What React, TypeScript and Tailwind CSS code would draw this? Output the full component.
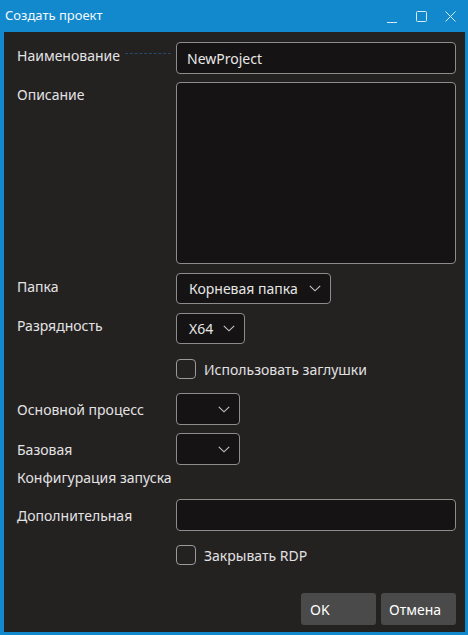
import React from "react";

const font = { fontFamily: '"Noto Sans", "Open Sans", sans-serif' };

function Chevron({ className = "" }: { className?: string }) {
  return (
    <svg width="12" height="7" viewBox="0 0 12 7" className={className} fill="none">
      <path d="M0.8 0.8 L6 5.8 L11.2 0.8" stroke="#c8c8c8" strokeWidth="1.1" />
    </svg>
  );
}

function Select({ width, value }: { width: string; value?: string }) {
  return (
    <div
      className={`${width} h-full flex items-center justify-between rounded-[4px] border border-[#8c8c8c] bg-[#151313] pl-[12px] pr-[9px] text-[14px] text-[#e6e6e6]`}
    >
      <span>{value ?? ""}</span>
      <Chevron />
    </div>
  );
}

function Checkbox({ label }: { label: string }) {
  return (
    <div className="flex items-center h-[20px]">
      <div className="w-[20px] h-[20px] rounded-[4px] border border-[#9a9a9a]" />
      <span className="ml-[8px] text-[14px] text-[#e2e2e2]">{label}</span>
    </div>
  );
}

function Label({ children, pt = 0 }: { children: React.ReactNode; pt?: number }) {
  return (
    <div className="w-[159px] shrink-0 text-[14px] leading-[19px] text-[#e3e3e3]" style={{ paddingTop: pt }}>
      {children}
    </div>
  );
}

export default function App() {
  return (
    <div className="w-[468px] h-[635px] bg-[#1289cc] flex flex-col" style={font}>
      {/* title bar */}
      <div className="h-[32px] flex items-center shrink-0 text-white">
        <span className="ml-[5px] text-[13px] text-[#f2f8fc]">Создать проект</span>
        <div className="ml-auto flex items-center h-full">
          <svg width="10" height="10" viewBox="0 0 10 10" className="mr-[19px] mt-[4px]">
            <path d="M0 9.5 H10" stroke="#d6ebf7" strokeWidth="1" />
          </svg>
          <svg width="11" height="11" viewBox="0 0 11 11" className="mr-[18px]">
            <rect x="0.5" y="0.5" width="10" height="10" fill="none" stroke="#d6ebf7" strokeWidth="1" rx="1" />
          </svg>
          <svg width="11" height="11" viewBox="0 0 11 11" className="mr-[12px]">
            <path d="M0.5 0.5 L10.5 10.5 M10.5 0.5 L0.5 10.5" stroke="#d6ebf7" strokeWidth="1" />
          </svg>
        </div>
      </div>

      {/* dialog body */}
      <div className="flex-1 ml-[4px] mr-[3px] mb-[3px] bg-[#242121] pl-[13px] pr-[9px] pt-[10px] flex flex-col">
        <div className="flex h-[32px]">
          <div className="w-[159px] shrink-0 flex items-start pt-[4px]">
            <span className="text-[14px] leading-[19px] text-[#e3e3e3]">Наименование</span>
            <div className="ml-[5px] mt-[7px] w-[46px] border-t border-dashed border-[#254a6c]" />
          </div>
          <div className="flex-1 flex items-center rounded-[4px] border border-[#8c8c8c] bg-[#151313] pl-[10px] text-[14px] text-[#e8e8e8]">
            NewProject
          </div>
        </div>

        <div className="flex h-[182px] mt-[8px]">
          <Label pt={3}>Описание</Label>
          <div className="flex-1 rounded-[4px] border border-[#8c8c8c] bg-[#151313]" />
        </div>

        <div className="flex h-[31px] mt-[9px]">
          <Label pt={4}>Папка</Label>
          <Select width="w-[155px]" value="Корневая папка" />
        </div>

        <div className="flex h-[31px] mt-[9px]">
          <Label pt={3}>Разрядность</Label>
          <Select width="w-[69px]" value="X64" />
        </div>

        <div className="flex mt-[15px]">
          <div className="w-[159px] shrink-0" />
          <Checkbox label="Использовать заглушки" />
        </div>

        <div className="flex h-[32px] mt-[14px] items-center">
          <Label>Основной процесс</Label>
          <Select width="w-[64px]" />
        </div>

        <div className="flex h-[32px] mt-[8px] items-center">
          <Label>Базовая</Label>
          <Select width="w-[64px]" />
        </div>

        <div className="mt-[3px] text-[14px] leading-[19px] text-[#e3e3e3]">Конфигурация запуска</div>

        <div className="flex h-[32px] mt-[12px] items-center">
          <Label>Дополнительная</Label>
          <div className="flex-1 h-full rounded-[4px] border border-[#8c8c8c] bg-[#151313]" />
        </div>

        <div className="flex mt-[14px]">
          <div className="w-[159px] shrink-0" />
          <Checkbox label="Закрывать RDP" />
        </div>

        <div className="flex justify-end gap-[5px] mt-[28px]">
          <button className="w-[75px] h-[32px] rounded-[3px] bg-[#4b4a4a] text-left pl-[9px] text-[14px] text-white">
            OK
          </button>
          <button className="w-[75px] h-[32px] rounded-[3px] bg-[#4b4a4a] text-left pl-[8px] text-[14px] text-white">
            Отмена
          </button>
        </div>
      </div>
    </div>
  );
}
